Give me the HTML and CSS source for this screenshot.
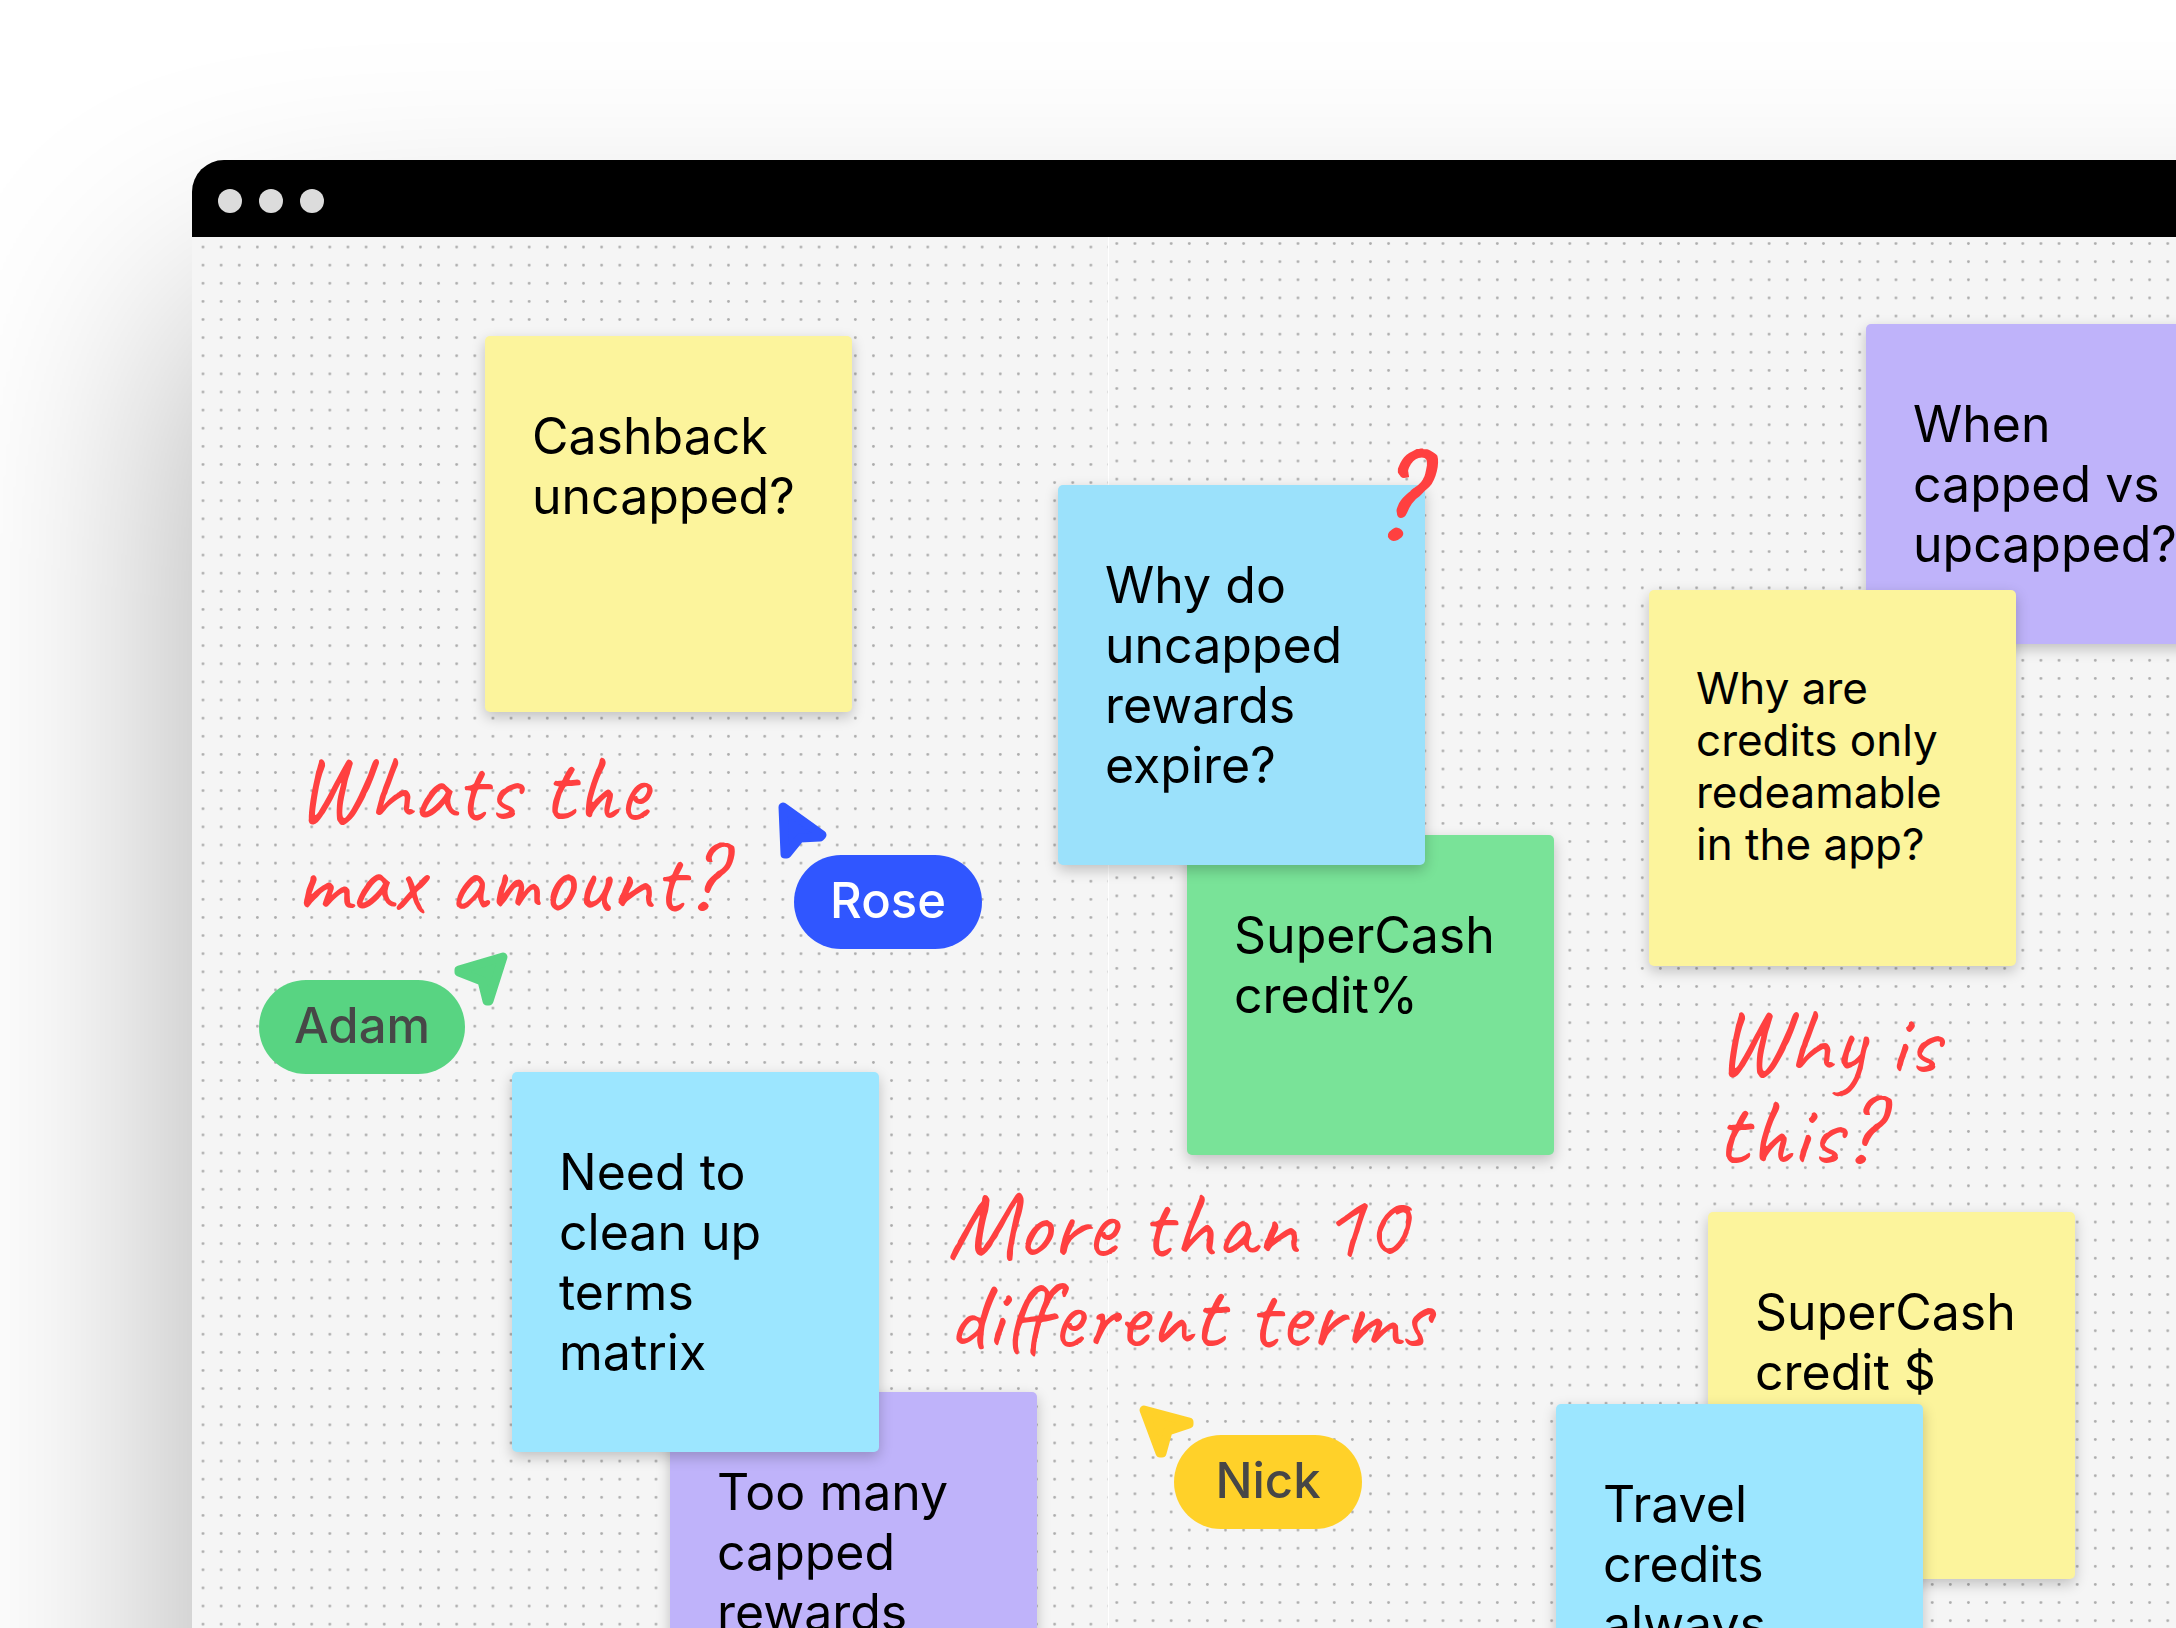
FILE: index.html
```
<!DOCTYPE html>
<html lang="en">
<head>
    <meta charset="UTF-8">
    <meta name="viewport" content="width=device-width, initial-scale=1.0">
    <title>Rewards board</title>
    <link rel="stylesheet" href="styles.css">
</head>
<body>
    <main class="window">
        <header class="title-bar">
            <span class="light"></span>
            <span class="light"></span>
            <span class="light"></span>
        </header>

        <section class="board">
            <!-- dot grid: two tiles with a thin seam between them -->
            <svg class="grid" aria-hidden="true">
                <defs>
                    <pattern id="dotsLeft" x="2" y="1" width="18.12" height="18.12" patternUnits="userSpaceOnUse">
                        <circle cx="9" cy="9" r="1.4" fill="#acacac"/>
                    </pattern>
                    <pattern id="dotsRight" x="915.8" y="70" width="18.12" height="18.12" patternUnits="userSpaceOnUse">
                        <circle cx="9" cy="9" r="1.4" fill="#acacac"/>
                    </pattern>
                </defs>
                <rect width="916" height="100%" fill="url(#dotsLeft)"/>
                <rect x="917" width="100%" height="100%" fill="url(#dotsRight)"/>
                <rect x="916" width="1" height="100%" fill="#ffffff"/>
            </svg>

            <article class="note yellow note-cashback">Cashback uncapped?</article>
            <article class="note green short note-percent">SuperCash credit%</article>
            <article class="note blue-soft tall note-expire">Why do uncapped rewards expire?</article>
            <article class="note purple short note-when">When capped vs upcapped?</article>
            <article class="note yellow small note-redeem">Why are credits only redeamable in the app?</article>
            <article class="note purple tall note-many">Too many capped rewards</article>
            <article class="note blue tall note-matrix">Need to clean up terms matrix</article>
            <article class="note yellow square note-dollar">SuperCash credit $</article>
            <article class="note blue tall note-travel">Travel credits always</article>

            <p class="scribble scribble-amount">Whats the<br>max amount?</p>
            <p class="scribble scribble-terms">More than 10<br>different terms</p>
            <p class="scribble scribble-why">Why is<br>this?</p>
            <p class="scribble scribble-mark">?</p>

            <svg class="pointer pointer-rose" width="48" height="60" viewBox="0 0 48 60" aria-hidden="true">
                <path d="M6 7 L45 35 L43 37 L23 38 L10 54 L8 54 Z"/>
            </svg>
            <span class="tag tag-rose">Rose</span>

            <svg class="pointer pointer-adam" width="56" height="56" viewBox="0 0 56 56" aria-hidden="true">
                <path d="M50 6 L6 19 L6 21 L29 30 L34 50 L36 50 Z"/>
            </svg>
            <span class="tag tag-adam">Adam</span>

            <svg class="pointer pointer-nick" width="56" height="56" viewBox="0 0 56 56" aria-hidden="true">
                <path d="M6 6 L51 18 L51 20 L30 27 L24 49 L22 49 Z"/>
            </svg>
            <span class="tag tag-nick">Nick</span>
        </section>
    </main>
</body>
</html>
```
FILE: styles.css
```
* {
    box-sizing: border-box;
}
body {
    margin: 0;
    height: 100vh;
    padding: 160px 0 0 192px;
    overflow: hidden;
    background-color: #ffffff;
    font-family: Inter, "Liberation Sans", sans-serif;
}

/* window */
.window {
    display: flex;
    flex-direction: column;
    width: 120vw;
    height: 150vh;
    border-radius: 32px;
    box-shadow: 0 150px 380px rgba(0, 0, 0, 0.33);
}
.title-bar {
    display: flex;
    align-items: center;
    gap: 17px;
    height: 77px;
    padding: 5px 26px 0;
    border-radius: 32px 32px 0 0;
    background-color: #000000;
}
.light {
    width: 24px;
    height: 24px;
    border-radius: 50%;
    background-color: #dcdcdc;
}
.board {
    position: relative;
    flex: 1;
    background-color: #f5f5f5;
}
.grid {
    display: block;
    width: 100%;
    height: 100%;
}

/* sticky notes */
.note {
    position: absolute;
    width: 367px;
    height: 376px;
    padding: 70px 40px 0 47px;
    border-radius: 5px;
    font-size: 50px;
    line-height: 60px;
    color: #000000;
    box-shadow: 0 5px 14px rgba(0, 0, 0, 0.22);
}
.short {
    height: 320px;
}
.tall {
    height: 380px;
}
.square {
    height: 367px;
}
.small {
    padding-top: 72px;
    font-size: 44px;
    line-height: 52px;
}
.yellow {
    background-color: #fcf49c;
}
.blue {
    background-color: #9ce6ff;
}
.blue-soft {
    background-color: #9be1fb;
}
.green {
    background-color: #79e398;
}
.purple {
    background-color: #bfb3fa;
}
.note-cashback {
    left: 293px;
    top: 99px;
}
.note-expire {
    left: 866px;
    top: 248px;
}
.note-percent {
    left: 995px;
    top: 598px;
}
.note-when {
    left: 1674px;
    top: 87px;
}
.note-redeem {
    left: 1457px;
    top: 353px;
}
.note-matrix {
    left: 320px;
    top: 835px;
}
.note-many {
    left: 478px;
    top: 1155px;
}
.note-dollar {
    left: 1516px;
    top: 975px;
}
.note-travel {
    left: 1364px;
    top: 1167px;
}

/* handwritten remarks */
.scribble {
    position: absolute;
    margin: 0;
    font-family: Caveat, Lato, cursive;
    font-size: 96px;
    font-weight: 500;
    line-height: 91px;
    white-space: nowrap;
    color: #ff4040;
}
.scribble-amount {
    left: 103px;
    top: 506px;
}
.scribble-terms {
    left: 755px;
    top: 942px;
}
.scribble-why {
    left: 1523px;
    top: 759px;
}
.scribble-mark {
    left: 1178px;
    top: 201px;
    font-size: 124px;
    font-weight: 700;
    line-height: 124px;
}

/* live cursors */
.tag {
    position: absolute;
    min-width: 188px;
    padding: 16px 35px 18px;
    border-radius: 47px;
    font-size: 49px;
    font-weight: 500;
    line-height: 60px;
    text-align: center;
    color: #474747;
}
.tag-rose {
    left: 602px;
    top: 618px;
    background-color: #3056ff;
    color: #ffffff;
}
.tag-adam {
    left: 67px;
    top: 743px;
    background-color: #58d482;
}
.tag-nick {
    left: 982px;
    top: 1198px;
    background-color: #ffd129;
}
.pointer {
    position: absolute;
    overflow: visible;
    stroke-width: 9;
    stroke-linejoin: round;
}
.pointer-rose {
    left: 585px;
    top: 563px;
    fill: #3056ff;
    stroke: #3056ff;
}
.pointer-adam {
    left: 261px;
    top: 714px;
    fill: #58d482;
    stroke: #58d482;
}
.pointer-nick {
    left: 946px;
    top: 1167px;
    fill: #ffd129;
    stroke: #ffd129;
}
```
